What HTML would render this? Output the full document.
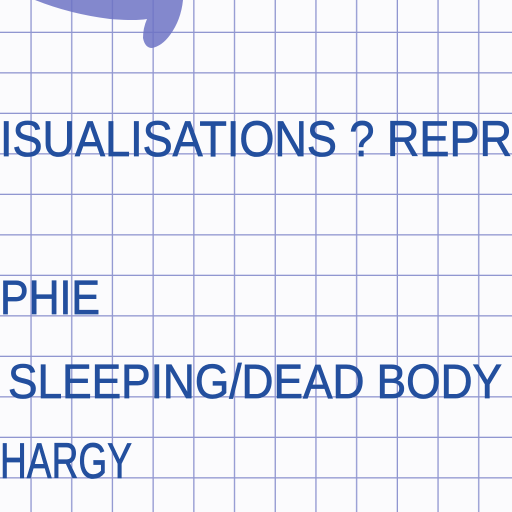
<!DOCTYPE html>
<html><head><style>
html,body{margin:0;padding:0;width:512px;height:512px;overflow:hidden;background:#fbfbfd}
svg{display:block}
text{font-family:"Liberation Sans",sans-serif;fill:#234f9e;font-weight:normal}
</style></head><body>
<svg width="512" height="512" viewBox="0 0 512 512">
<defs>
<pattern id="g" x="-9" y="-7.5" width="40.7" height="40.5" patternUnits="userSpaceOnUse">
<rect x="39.4" y="0" width="1.8" height="40.5" fill="#9096d0"/>
<rect x="0" y="39.2" width="40.7" height="1.8" fill="#9096d0"/>
</pattern>
</defs>
<rect width="512" height="512" fill="#fbfbfd"/>
<rect width="512" height="512" fill="url(#g)"/>
<path d="M35 0 Q70 14 110 19 Q135 21 147 19 Q143 28 143 38 Q145 48 152 48 Q162 46 170 35 Q181 20 183 0 Z" fill="#6d73c4" opacity="0.85"/>
<g stroke="#234f9e" stroke-width="0.8">
<text x="0" y="156" font-size="50" textLength="512" lengthAdjust="spacingAndGlyphs">ISUALISATIONS ? REPR</text>
<text x="0" y="314" font-size="48" textLength="100" lengthAdjust="spacingAndGlyphs">PHIE</text>
<text x="8" y="398" font-size="48" textLength="494" lengthAdjust="spacingAndGlyphs">SLEEPING/DEAD BODY</text>
<text x="0" y="478" font-size="50" textLength="132" lengthAdjust="spacingAndGlyphs">HARGY</text>
</g>
</svg>
</body></html>
